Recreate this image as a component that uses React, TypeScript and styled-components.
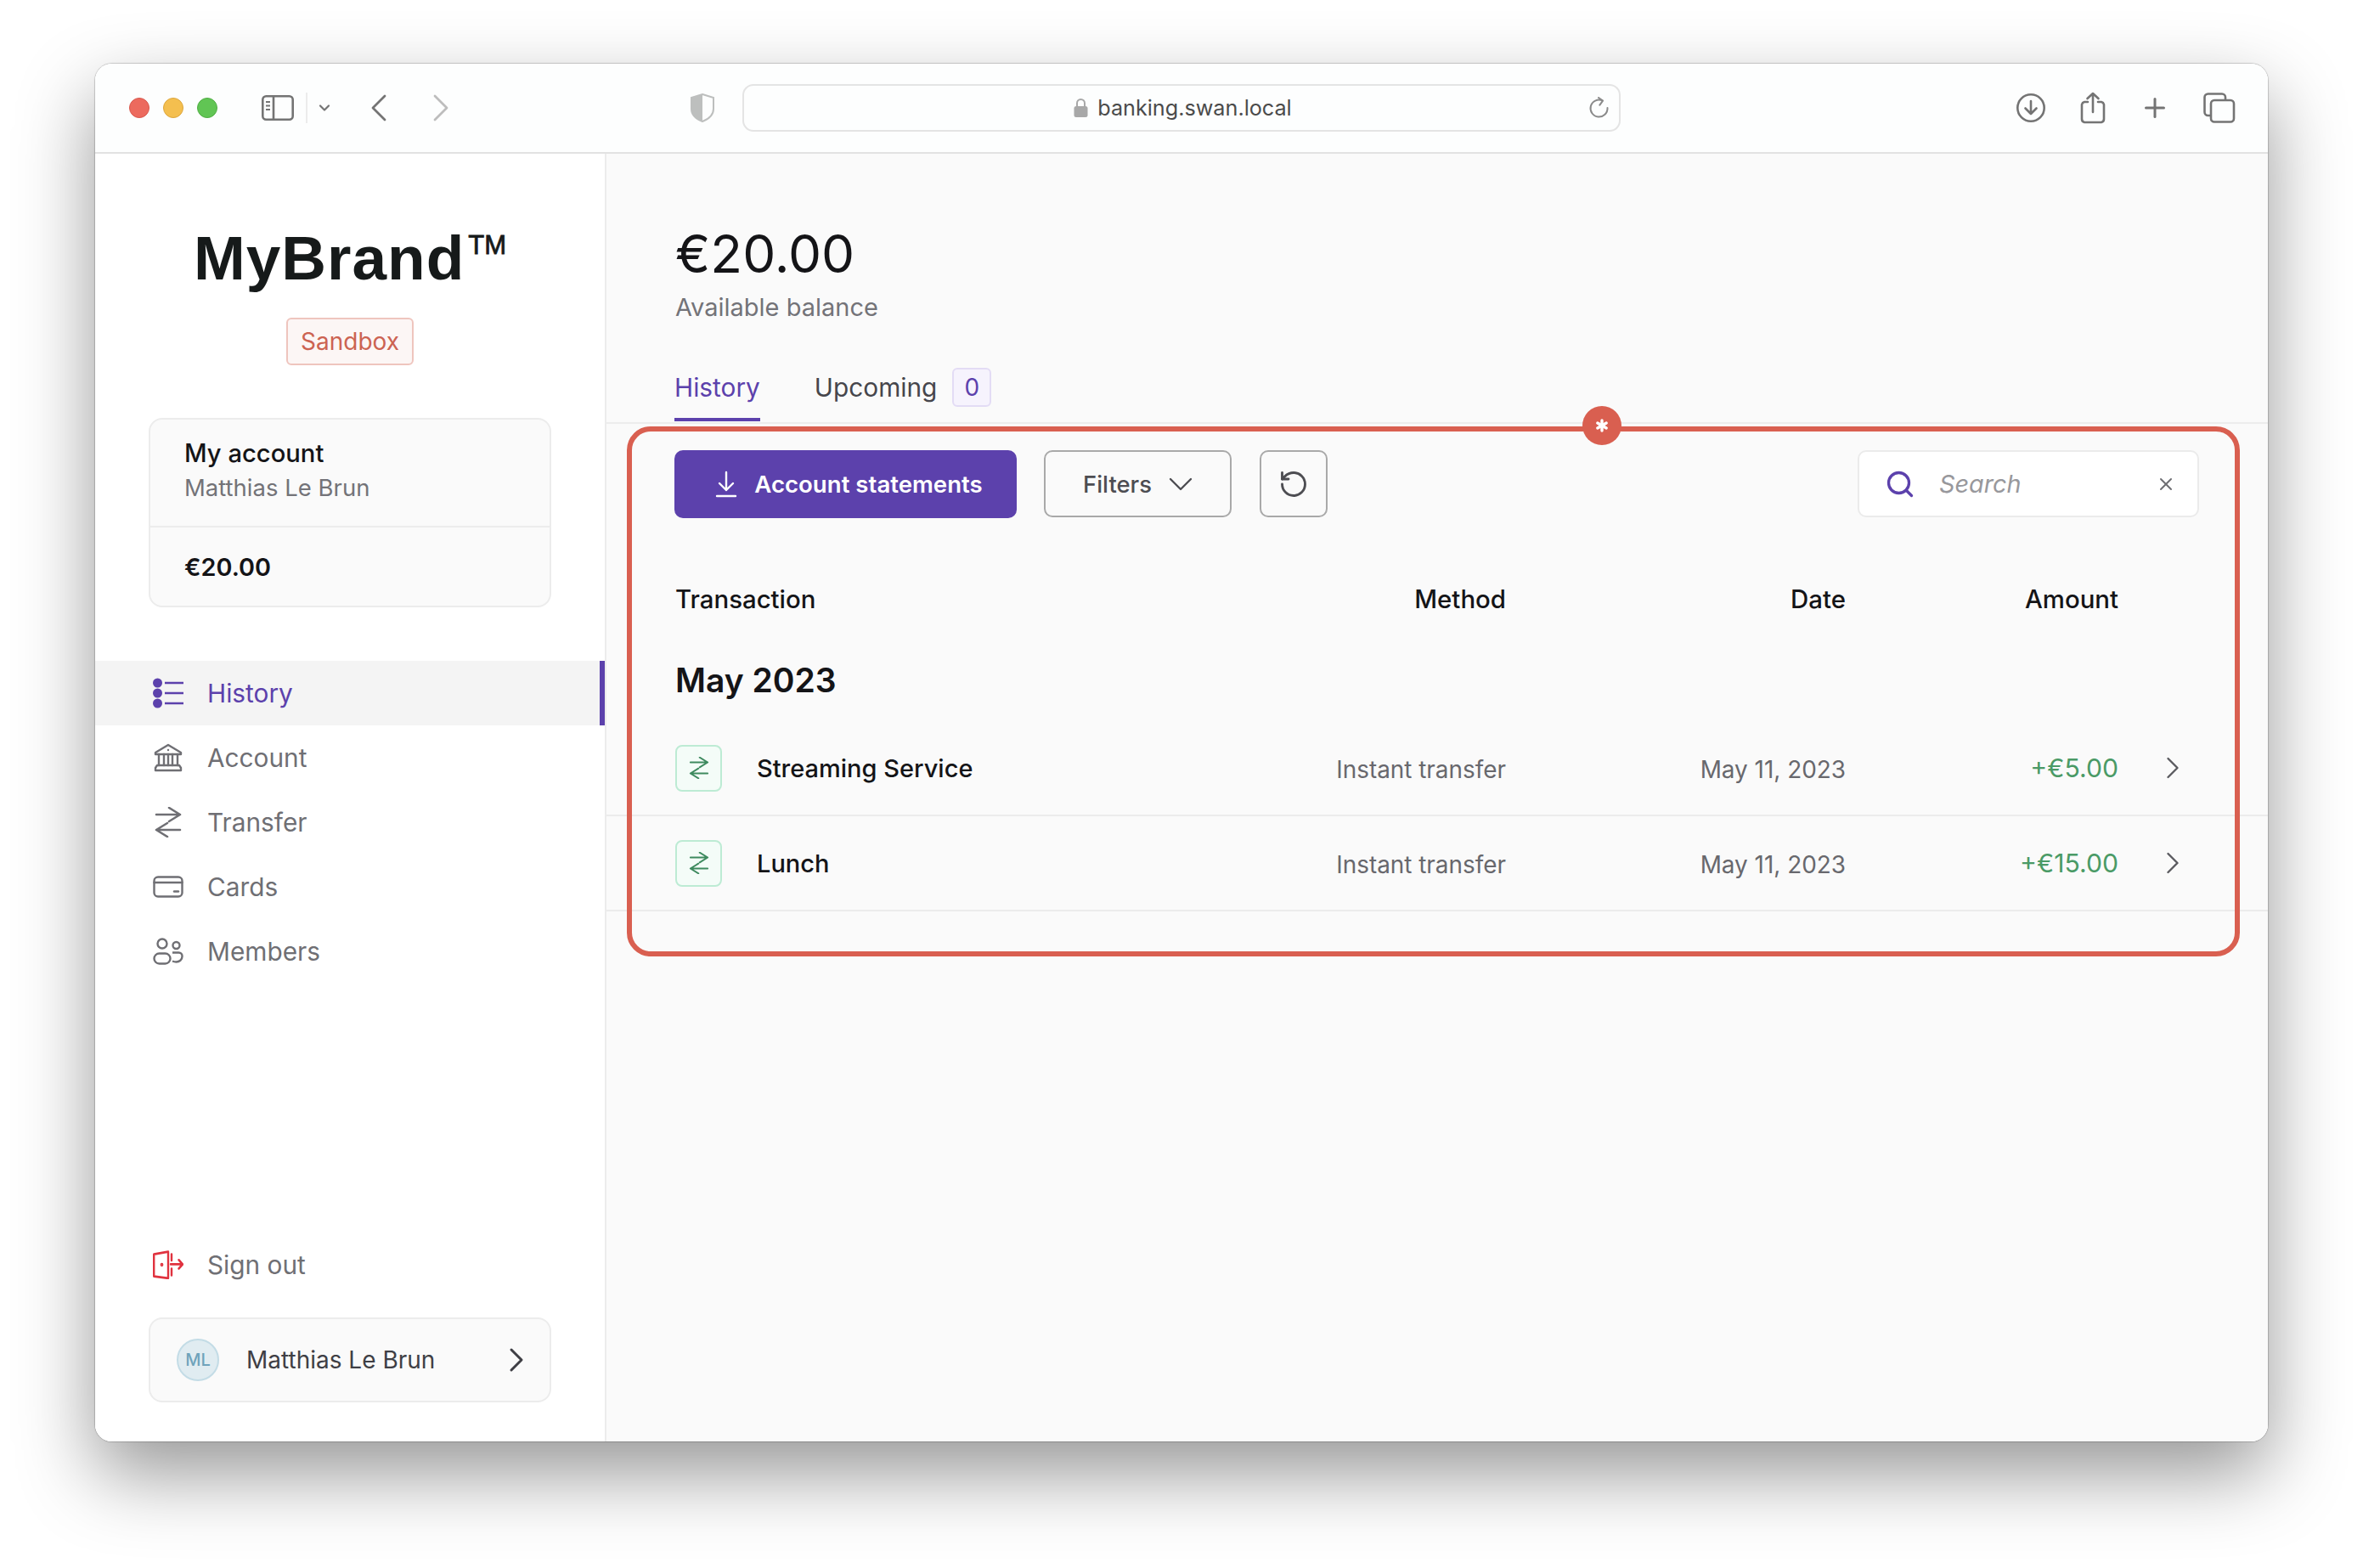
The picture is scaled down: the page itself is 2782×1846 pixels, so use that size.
import React from 'react';
import styled, { createGlobalStyle } from 'styled-components';
import { ChevronLeft, ChevronRight, ChevronDown, Search, X, RotateCcw, Plus, Asterisk } from 'lucide-react';

const GlobalStyle = createGlobalStyle`
  html, body {
    margin: 0;
    padding: 0;
    background: #fff;
    font-family: Inter, "Liberation Sans", sans-serif;
  }
  * { box-sizing: border-box; }
`;

const Page = styled.div`
  width: 2782px;
  height: 1846px;
  padding: 75px 112px 0;
  overflow: hidden;
`;

const Window = styled.div`
  width: 2558px;
  height: 1622px;
  border-radius: 20px;
  background: #fff;
  overflow: hidden;
  display: flex;
  flex-direction: column;
`;

const WindowShadow = styled.div`
  border-radius: 20px;
  box-shadow: 0 38px 90px rgba(0, 0, 0, 0.41), 0 0 1px 1px rgba(0, 0, 0, 0.18);
`;

const Toolbar = styled.div`
  height: 106px;
  flex: none;
  display: flex;
  align-items: center;
  background: #fdfefe;
  border-bottom: 2px solid #e2e2e2;
  padding: 0 38px 0 40px;
  color: #747474;
`;

const Lights = styled.div`
  display: flex;
  gap: 16px;
  margin-right: 52px;
`;

const Light = styled.span<{ $c: string; $b: string }>`
  width: 24px;
  height: 24px;
  border-radius: 50%;
  background: ${p => p.$c};
  border: 1px solid ${p => p.$b};
`;

const ToolDivider = styled.span`
  width: 2px;
  height: 36px;
  background: #ececec;
  margin: 0 8px 0 14px;
`;

const ToolIcon = styled.span<{ $w: number; $ml?: number; $c?: string }>`
  display: flex;
  justify-content: center;
  align-items: center;
  width: ${p => p.$w}px;
  margin-left: ${p => p.$ml ?? 0}px;
  color: ${p => p.$c ?? '#747474'};
  svg { flex: none; }
`;

const UrlBar = styled.div`
  width: 1034px;
  height: 56px;
  margin-left: 32px;
  border: 2px solid #e4e4e4;
  border-radius: 13px;
  background: #fdfefe;
  position: relative;
  display: flex;
  align-items: center;
  justify-content: center;
  gap: 11px;
  padding-left: 3px;
  font-size: 25.2px;
  color: #4b4b4b;
`;

const Reload = styled.span`
  position: absolute;
  right: 10px;
  top: 13px;
  color: #8a8a8a;
  display: flex;
`;

const ToolRight = styled.div`
  margin-left: auto;
  display: flex;
  align-items: center;
  gap: 39px;
`;

const Body = styled.div`
  flex: 1;
  display: flex;
  min-height: 0;
`;

const Sidebar = styled.aside`
  width: 602px;
  flex: none;
  background: #fff;
  border-right: 2px solid #ececec;
  display: flex;
  flex-direction: column;
  padding-bottom: 46px;
`;

const Logo = styled.div`
  margin-top: 83px;
  height: 80px;
  line-height: 80px;
  text-align: center;
  font-family: "Liberation Sans", Arial, sans-serif;
  font-weight: 700;
  font-size: 73px;
  letter-spacing: 1px;
  color: #161a1a;
  white-space: nowrap;
`;

const Tm = styled.sup`
  font-size: 31px;
  font-weight: 400;
  line-height: 0;
  vertical-align: 30px;
  margin-left: 4px;
  letter-spacing: 0;
  -webkit-text-stroke: 0.8px #161a1a;
`;

const SandboxWrap = styled.div`
  margin-top: 30px;
  display: flex;
  justify-content: center;
`;

const Sandbox = styled.span`
  width: 150px;
  height: 56px;
  display: flex;
  align-items: center;
  justify-content: center;
  border: 2px solid #efc5be;
  border-radius: 6px;
  background: #fcf6f5;
  color: #cc6352;
  font-size: 28px;
`;

const Card = styled.div`
  margin: 62px 0 0 63px;
  width: 474px;
  border: 2px solid #ececec;
  border-radius: 16px;
  background: #fafafa;
`;

const CardTop = styled.div`
  height: 127px;
  padding: 20px 40px 0;
  border-bottom: 2px solid #ececec;
`;

const CardName = styled.div`
  font-size: 29.2px;
  line-height: 40px;
  font-weight: 500;
  color: #141417;
`;

const CardSub = styled.div`
  font-size: 27.5px;
  line-height: 40px;
  color: #737378;
`;

const CardBottom = styled.div`
  height: 92px;
  padding: 0 40px;
  display: flex;
  align-items: center;
  font-size: 28.8px;
  font-weight: 600;
  color: #141417;
`;

const Nav = styled.nav`
  margin-top: 63px;
`;

const NavRow = styled.div<{ $active?: boolean }>`
  height: 76px;
  display: flex;
  align-items: center;
  gap: 28px;
  padding-left: 68px;
  font-size: 29.8px;
  color: ${p => (p.$active ? '#5c41ac' : '#6f6f74')};
  background: ${p => (p.$active ? '#f4f4f4' : 'transparent')};
  border-right: 6px solid ${p => (p.$active ? '#5c41ac' : 'transparent')};
  svg { flex: none; }
`;

const SignOut = styled(NavRow)`
  margin-top: auto;
`;

const UserCard = styled.div`
  margin: 24px 0 0 63px;
  width: 474px;
  height: 100px;
  border: 2px solid #ececec;
  border-radius: 16px;
  background: #fafafa;
  display: flex;
  align-items: center;
  padding: 0 15px 0 31px;
  font-size: 28px;
  color: #3f3f45;
  svg { flex: none; }
`;

const Avatar = styled.span`
  width: 50px;
  height: 50px;
  border-radius: 50%;
  background: #e0ecf1;
  border: 2px solid #c3dce6;
  color: #6fa3bb;
  font-size: 20px;
  font-weight: 500;
  display: flex;
  align-items: center;
  justify-content: center;
  margin-right: 32px;
  flex: none;
`;

const UserName = styled.span`
  flex: 1;
`;

const Main = styled.main`
  flex: 1;
  position: relative;
  background: #fafafa;
  padding-top: 80px;
`;

const Balance = styled.div`
  margin-left: 81px;
  font-size: 62px;
  line-height: 76px;
  color: #141417;
`;

const BalanceLabel = styled.div`
  margin: 5px 0 0 81px;
  font-size: 29px;
  line-height: 40px;
  color: #737378;
`;

const Tabs = styled.div`
  margin-top: 48px;
  height: 69px;
  padding-left: 80px;
  border-bottom: 2px solid #ececec;
  display: flex;
  gap: 64px;
`;

const Tab = styled.div<{ $active?: boolean }>`
  height: 66px;
  padding-top: 6px;
  display: flex;
  align-items: flex-start;
  font-size: 29.8px;
  line-height: 40px;
  color: ${p => (p.$active ? '#5c41ac' : '#46464c')};
  border-bottom: 4px solid ${p => (p.$active ? '#5c41ac' : 'transparent')};
`;

const TabCount = styled.span`
  width: 46px;
  height: 46px;
  margin: -3px 0 0 18px;
  border: 2px solid #e3dcf5;
  border-radius: 6px;
  background: #f6f3fd;
  color: #5c41ac;
  font-size: 28px;
  display: flex;
  align-items: center;
  justify-content: center;
`;

const Actions = styled.div`
  margin-top: 31px;
  padding: 0 81px 0 80px;
  display: flex;
  align-items: flex-start;
`;

const PrimaryButton = styled.button`
  width: 403px;
  height: 80px;
  border: none;
  border-radius: 10px;
  background: #5c41ac;
  color: #fff;
  font: 600 27.6px Inter, sans-serif;
  display: flex;
  align-items: center;
  justify-content: center;
  gap: 20px;
  padding: 0 0 0 8px;
`;

const GhostButton = styled.button<{ $w: number; $ml: number }>`
  width: ${p => p.$w}px;
  height: 79px;
  margin-left: ${p => p.$ml}px;
  border: 2px solid #a9a9a9;
  border-radius: 10px;
  background: #fafafa;
  color: #4d4d52;
  font: 500 27.4px Inter, sans-serif;
  display: flex;
  align-items: center;
  justify-content: center;
  gap: 20px;
  padding: 0;
`;

const SearchBox = styled.div`
  margin-left: auto;
  width: 402px;
  height: 79px;
  border: 2px solid #ebebeb;
  border-radius: 10px;
  background: #fff;
  display: flex;
  align-items: center;
  padding: 0 25px 0 30px;
  color: #5c41ac;
`;

const SearchText = styled.span`
  flex: 1;
  margin-left: 28px;
  font-size: 28.8px;
  font-style: italic;
  color: #98989c;
`;

const Grid = styled.div`
  display: grid;
  grid-template-columns: 1fr 280px 400px 321px 76px;
  align-items: center;
  padding: 0 100px 0 81px;
`;

const TableHead = styled(Grid)`
  margin-top: 70px;
  height: 50px;
  font-size: 29.4px;
  font-weight: 500;
  color: #141417;
`;

const Cell = styled.span<{ $end?: boolean }>`
  ${p => (p.$end ? 'justify-self: end;' : '')}
`;

const Month = styled.div`
  margin: 41px 0 18px 81px;
  font-size: 39px;
  line-height: 60px;
  font-weight: 600;
  color: #141417;
`;

const Row = styled(Grid)`
  height: 112px;
  border-bottom: 2px solid #ececec;
  font-size: 29px;
`;

const RowName = styled.span`
  display: flex;
  align-items: center;
  gap: 41px;
  color: #141417;
  font-weight: 500;
`;

const RowIcon = styled.span`
  width: 55px;
  height: 55px;
  border: 2px solid #bdebd4;
  border-radius: 8px;
  background: #f4fcf8;
  color: #3e8a5f;
  display: flex;
  align-items: center;
  justify-content: center;
`;

const Muted = styled(Cell)`
  color: #68686d;
  font-size: 27.9px;
  padding-top: 4px;
`;

const Amount = styled(Cell)`
  color: #4a9a66;
  font-size: 30.2px;
`;

const RowChevron = styled(Cell)`
  display: flex;
  color: #5a5a5f;
  margin-right: -10px;
`;

const Annotation = styled.div`
  position: absolute;
  left: 24px;
  top: 321px;
  width: 1899px;
  height: 624px;
  border: 6px solid #d95f50;
  border-radius: 28px;
  pointer-events: none;
`;

const AnnotationDot = styled.span`
  position: absolute;
  left: 1119px;
  top: -30px;
  width: 46px;
  height: 46px;
  border-radius: 50%;
  background: #d95f50;
  color: #fff;
  display: flex;
  align-items: center;
  justify-content: center;
`;

const SwapIcon = ({ size = 36, sw = 2.6 }: { size?: number; sw?: number }) => (
  <svg width={size} height={size} viewBox="0 0 36 36" fill="none" stroke="currentColor" strokeWidth={sw} strokeLinecap="round" strokeLinejoin="round">
    <path d="M4 9h28M19 1l13 8-13 8" />
    <path d="M32 27H4M17 19 4 27l13 8" />
  </svg>
);

const nav = [
  {
    label: 'Account',
    icon: (
      <svg width="36" height="36" viewBox="0 0 36 36" fill="none" stroke="currentColor" strokeWidth="2.4" strokeLinejoin="round" strokeLinecap="round">
        <path d="M3 12 18 3l15 9v2H3z" />
        <circle cx="18" cy="9" r="1.2" fill="currentColor" stroke="none" />
        <path d="M7 14v13M13 14v13M18 14v13M23 14v13M29 14v13" />
        <path d="M5 27h26l2 3v3H3v-3z" />
      </svg>
    ),
  },
  { label: 'Transfer', icon: <SwapIcon /> },
  {
    label: 'Cards',
    icon: (
      <svg width="36" height="36" viewBox="0 0 36 36" fill="none" stroke="currentColor" strokeWidth="2.4" strokeLinecap="round">
        <rect x="1.5" y="6.5" width="33" height="23" rx="4.5" />
        <path d="M1.5 13h33" />
        <path d="M25 23.5h5" />
      </svg>
    ),
  },
  {
    label: 'Members',
    icon: (
      <svg width="36" height="36" viewBox="0 0 36 36" fill="none" stroke="currentColor" strokeWidth="2.4">
        <circle cx="11" cy="9" r="5.5" />
        <circle cx="27.5" cy="11" r="4" />
        <rect x="1.5" y="20.5" width="19" height="12" rx="6" />
        <path d="M23 19.5h7.5a4 4 0 0 1 4 4v.5c0 4-3.5 6.5-7 6.5-1.5 0-3-.3-4.5-1" />
      </svg>
    ),
  },
];

const rows = [
  { name: 'Streaming Service', amount: '+€5.00' },
  { name: 'Lunch', amount: '+€15.00' },
];

export default function App() {
  return (
    <Page>
      <GlobalStyle />
      <WindowShadow>
        <Window>
          <Toolbar>
            <Lights>
              <Light $c="#ec6a5e" $b="#d9584d" />
              <Light $c="#f4bf4f" $b="#dda63c" />
              <Light $c="#61c554" $b="#50ad44" />
            </Lights>
            <svg width="38" height="30" viewBox="0 0 38 30" fill="none" stroke="#747474" strokeWidth="2.6">
              <rect x="1.3" y="1.3" width="35.4" height="27.4" rx="4" />
              <path d="M14 1.5v27" />
              <path d="M5 8h5M5 12.5h5M5 17h5" strokeWidth="2" />
            </svg>
            <ToolDivider />
            <ToolIcon $w={24}><ChevronDown size={20} strokeWidth={2.6} /></ToolIcon>
            <ToolIcon $w={40} $ml={32}><ChevronLeft size={56} strokeWidth={1.2} /></ToolIcon>
            <ToolIcon $w={40} $ml={33} $c="#bdbdbd"><ChevronRight size={56} strokeWidth={1.2} /></ToolIcon>
            <ToolIcon $w={30} $ml={273}>
              <svg width="28" height="34" viewBox="0 0 28 34" fill="none">
                <path d="M14 1 27 5v13c0 7-5 12-13 15C6 30 1 25 1 18V5z" fill="#fdfefe" stroke="#bdbfbe" strokeWidth="2" />
                <path d="M14 1 1 5v13c0 7 5 12 13 15z" fill="#bdbfbe" />
              </svg>
            </ToolIcon>
            <UrlBar>
              <svg width="17" height="24" viewBox="0 0 17 24" fill="none">
                <path d="M4 11V6.5a4.5 4.5 0 0 1 9 0V11" stroke="#a8a8a8" strokeWidth="2" />
                <rect x="0.5" y="10" width="16" height="13" rx="2.5" fill="#a8a8a8" />
              </svg>
              banking.swan.local
              <Reload>
                <svg width="26" height="28" viewBox="0 0 26 28" fill="none" stroke="currentColor" strokeWidth="2" strokeLinecap="round" strokeLinejoin="round">
                  <path d="M22.5 13a10 10 0 1 1-6-8.6" />
                  <path d="M12 1l5 3.6-3.6 5" />
                </svg>
              </Reload>
            </UrlBar>
            <ToolRight>
              <svg width="36" height="36" viewBox="0 0 36 36" fill="none" stroke="#747474" strokeWidth="2.6" strokeLinecap="round" strokeLinejoin="round">
                <circle cx="18" cy="18" r="15.7" />
                <path d="M18 10v15M11.5 18.5 18 25l6.5-6.5" />
              </svg>
              <svg width="32" height="38" viewBox="0 0 32 38" fill="none" stroke="#747474" strokeWidth="2.6" strokeLinecap="round" strokeLinejoin="round">
                <path d="M10 12H6a4 4 0 0 0-3 3v17a4 4 0 0 0 3 4h20a4 4 0 0 0 3-4V15a4 4 0 0 0-3-3h-4" />
                <path d="M16 24V2M9.5 8 16 2l6.5 6" />
              </svg>
              <Plus size={36} strokeWidth={2} color="#747474" />
              <svg width="38" height="36" viewBox="0 0 38 36" fill="none" stroke="#747474" strokeWidth="2.6">
                <path d="M9 27H5.5a4 4 0 0 1-4-4V5.5a4 4 0 0 1 4-4H22a4 4 0 0 1 4 4V9" />
                <rect x="9" y="9" width="27" height="25.5" rx="4" />
              </svg>
            </ToolRight>
          </Toolbar>
          <Body>
            <Sidebar>
              <Logo>MyBrand<Tm>TM</Tm></Logo>
              <SandboxWrap><Sandbox>Sandbox</Sandbox></SandboxWrap>
              <Card>
                <CardTop>
                  <CardName>My account</CardName>
                  <CardSub>Matthias Le Brun</CardSub>
                </CardTop>
                <CardBottom>€20.00</CardBottom>
              </Card>
              <Nav>
                <NavRow $active>
                  <svg width="36" height="36" viewBox="0 0 36 36" fill="none">
                    <circle cx="5.5" cy="6" r="5.5" fill="currentColor" />
                    <circle cx="5.5" cy="18" r="5.5" fill="currentColor" />
                    <circle cx="5.5" cy="30" r="5.5" fill="currentColor" />
                    <path d="M14 6h22M14 18h22M14 30h22" stroke="currentColor" strokeWidth="2.4" />
                  </svg>
                  History
                </NavRow>
                {nav.map(item => (
                  <NavRow key={item.label}>
                    {item.icon}
                    {item.label}
                  </NavRow>
                ))}
              </Nav>
              <SignOut>
                <svg width="36" height="34" viewBox="0 0 36 30" preserveAspectRatio="none" fill="none" stroke="#e0323f" strokeWidth="2.4" strokeLinecap="round" strokeLinejoin="round">
                  <path d="M18 1.5 1.2 4v23l16.8 2z" />
                  <path d="M22 4v6.5M22 19v7" />
                  <path d="M21 14.5h14M30.5 10l4.5 4.5-4.5 4.5" />
                  <circle cx="10.5" cy="15" r="0.7" fill="#e0323f" />
                </svg>
                Sign out
              </SignOut>
              <UserCard>
                <Avatar>ML</Avatar>
                <UserName>Matthias Le Brun</UserName>
                <ChevronRight size={48} strokeWidth={1.5} />
              </UserCard>
            </Sidebar>
            <Main>
              <Balance>€20.00</Balance>
              <BalanceLabel>Available balance</BalanceLabel>
              <Tabs>
                <Tab $active>History</Tab>
                <Tab>Upcoming<TabCount>0</TabCount></Tab>
              </Tabs>
              <Actions>
                <PrimaryButton>
                  <svg width="26" height="32" viewBox="0 0 26 32" fill="none" stroke="#fff" strokeWidth="2.4" strokeLinecap="round" strokeLinejoin="round">
                    <path d="M13 2v21M5 15l8 8 8-8" />
                    <path d="M2 30h22" />
                  </svg>
                  Account statements
                </PrimaryButton>
                <GhostButton $w={221} $ml={32}>
                  Filters
                  <svg width="28" height="16" viewBox="0 0 28 16" fill="none" stroke="currentColor" strokeWidth="2.4" strokeLinecap="round" strokeLinejoin="round">
                    <path d="M2 2l12 12L26 2" />
                  </svg>
                </GhostButton>
                <GhostButton $w={80} $ml={33}>
                  <RotateCcw size={36} strokeWidth={1.9} />
                </GhostButton>
                <SearchBox>
                  <Search size={36} strokeWidth={2.2} />
                  <SearchText>Search</SearchText>
                  <X size={24} strokeWidth={2} color="#6f6f74" />
                </SearchBox>
              </Actions>
              <TableHead>
                <Cell>Transaction</Cell>
                <Cell $end>Method</Cell>
                <Cell $end>Date</Cell>
                <Cell $end>Amount</Cell>
                <span />
              </TableHead>
              <Month>May 2023</Month>
              {rows.map(row => (
                <Row key={row.name}>
                  <RowName>
                    <RowIcon><SwapIcon size={26} sw={2.8} /></RowIcon>
                    {row.name}
                  </RowName>
                  <Muted $end>Instant transfer</Muted>
                  <Muted $end>May 11, 2023</Muted>
                  <Amount $end>{row.amount}</Amount>
                  <RowChevron $end><ChevronRight size={44} strokeWidth={1.3} /></RowChevron>
                </Row>
              ))}
              <Annotation>
                <AnnotationDot><Asterisk size={24} strokeWidth={3.4} /></AnnotationDot>
              </Annotation>
            </Main>
          </Body>
        </Window>
      </WindowShadow>
    </Page>
  );
}
